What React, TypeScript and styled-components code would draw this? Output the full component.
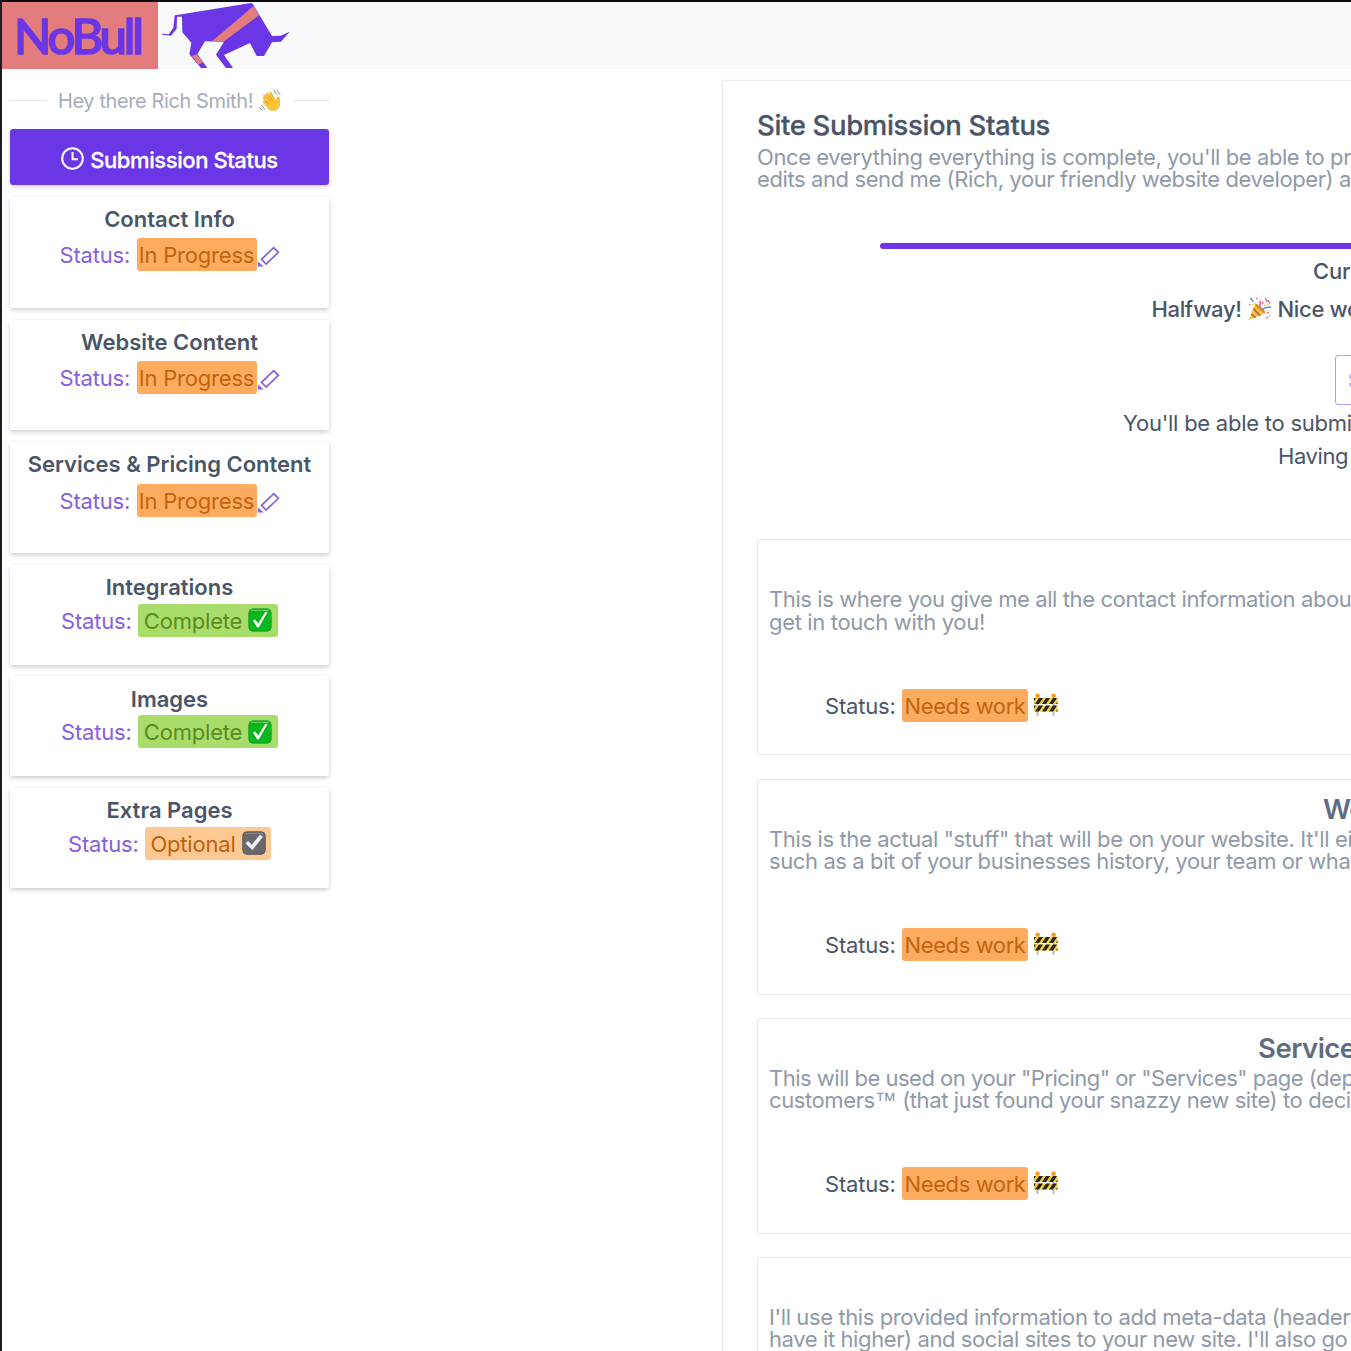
import React from "react";
import styled, { createGlobalStyle } from "styled-components";

const Global = createGlobalStyle`
  * { box-sizing: border-box; }
  html, body { margin: 0; padding: 0; overflow: hidden; }
  body { font-family: Inter, "Liberation Sans", sans-serif; background: #fff; color: #4a5568; }
  svg { display: block; flex: none; }
`;

const Window = styled.div`
  width: 1351px;
  height: 1351px;
  overflow: hidden;
  border-top: 2px solid #0b0b10;
  border-left: 2px solid #1c1b26;
  background: #fff;
`;
const Header = styled.header`
  height: 67px;
  display: flex;
  background: #f7f9fb;
`;
const LogoBox = styled.div`
  width: 156px;
  padding-left: 12px;
  background: #e27c7d;
  color: #6b36e5;
  font: 500 49px/67px Lato, sans-serif;
  letter-spacing: -3.2px;
  -webkit-text-stroke: 1.6px #6b36e5;
  white-space: nowrap;
`;
const Bull = styled.svg`
  margin-left: 4px;
`;
const Main = styled.main`
  display: flex;
  align-items: flex-start;
`;
const Sidebar = styled.aside`
  width: 319px;
  margin-left: 8px;
  padding-top: 18px;
  display: flex;
  flex-direction: column;
  flex: none;
`;
const Greeting = styled.div`
  height: 27px;
  display: flex;
  align-items: center;
  color: #a5adba;
  font-size: 20px;
  white-space: nowrap;
`;
const Rule = styled.i`
  width: 36px;
  height: 1px;
  background: #e4e6ea;
  &:last-child { margin-left: auto; }
`;
const Hello = styled.span`
  margin: 0 6px 0 12px;
  letter-spacing: -0.4px;
`;
const Active = styled.button`
  height: 56px;
  margin: 15px 0 12px;
  padding: 6px 0 0;
  display: flex;
  justify-content: center;
  align-items: center;
  gap: 6px;
  border: 0;
  border-radius: 3px;
  background: #6b36e5;
  color: #fff;
  font: 500 22px/28px Inter, sans-serif;
  letter-spacing: -0.42px;
  -webkit-text-stroke: 0.3px #fff;
  box-shadow: 0 2px 4px rgba(0, 0, 0, 0.16);
  svg { margin-top: -4px; }
`;
const Nav = styled.nav`
  display: flex;
  flex-direction: column;
  gap: 11.65px;
`;
const NavCard = styled.div<{ $short?: boolean }>`
  height: ${(p) => (p.$short ? 100 : 110.9)}px;
  padding-top: 7.4px;
  background: #fff;
  border-radius: 2px;
  box-shadow: 0 2px 5px rgba(0, 0, 0, 0.2);
`;
const NavTitle = styled.h3`
  margin: 0;
  text-align: center;
  font: 600 22px/30px Inter, sans-serif;
  color: #4a5568;
`;
const T = styled.span<{ $ls?: number }>`
  letter-spacing: ${(p) => p.$ls ?? -0.2}px;
  white-space: nowrap;
`;
const StatusRow = styled.div<{ $top: number }>`
  height: 33px;
  display: flex;
  justify-content: center;
  align-items: center;
  margin-top: ${(p) => p.$top}px;
  color: #8560df;
  font-size: 22px;
  line-height: 33px;
  white-space: nowrap;
  ${T} { padding-top: 2px; }
`;
const tones = {
  progress: ["#fdac5f", "#c2640f"],
  complete: ["#a9dd6b", "#5b8a1e"],
  optional: ["#fdc992", "#c2600f"],
};
const Badge = styled.span<{ $tone: keyof typeof tones; $w: number }>`
  height: 33px;
  width: ${(p) => p.$w}px;
  margin-left: 6.500px;
  display: flex;
  align-items: center;
  justify-content: center;
  gap: 6px;
  border-radius: 3px;
  background: ${(p) => tones[p.$tone][0]};
  color: ${(p) => tones[p.$tone][1]};
`;
const PencilIcon = styled.svg`
  margin: 4px 0 0 1px;
`;
const Panel = styled.section`
  width: 640px;
  height: 1300px;
  flex: none;
  margin: 11px 0 0 393px;
  padding: 28px 0 0 34px;
  border: 1px solid #e8eaed;
  border-radius: 3px;
  box-shadow: 0 0 3px rgba(0, 0, 0, 0.06);
`;
const Title = styled.h1`
  margin: 0;
  font: 500 27.5px/32px Inter, sans-serif;
  letter-spacing: -0.34px;
  color: #4a5568;
  -webkit-text-stroke: 0.3px #4a5568;
`;
const Copy = styled.p<{ $top?: number }>`
  margin: ${(p) => p.$top ?? 0}px 0 0;
  font-size: 22px;
  line-height: 22.4px;
  color: #8f99a8;
  white-space: nowrap;
`;
const Trademark = styled.span`
  font-family: "Liberation Sans", sans-serif;
  line-height: 1;
`;
const Line = styled.div<{ $h: number; $x: number; $weight?: number }>`
  height: ${(p) => p.$h}px;
  line-height: ${(p) => p.$h}px;
  padding-left: ${(p) => p.$x}px;
  display: flex;
  align-items: center;
  gap: 6px;
  font-size: 22px;
  font-weight: ${(p) => p.$weight ?? 400};
  white-space: nowrap;
`;
const Progress = styled.div`
  height: 6px;
  margin: 52px 0 4px 123px;
  border-radius: 3px 0 0 3px;
  background: #6b36e5;
`;
const Submit = styled.button`
  display: block;
  width: 120px;
  height: 50px;
  margin: 26px 0 2px 578px;
  padding: 0 0 0 12px;
  text-align: left;
  border: 1px solid #b49cee;
  border-radius: 3px;
  background: #fff;
  color: #b49cee;
  font: 600 22px/48px Inter, sans-serif;
`;
const Sections = styled.div`
  margin-top: 66.5px;
  display: flex;
  flex-direction: column;
  gap: 23.2px;
`;
const Section = styled.article`
  height: 216px;
  padding: 12px 0 0 11px;
  border: 1px solid #e6e8eb;
  border-radius: 3px;
`;
const SectionTitle = styled.h2<{ $x: number }>`
  margin: 0;
  height: 36px;
  padding-left: ${(p) => p.$x}px;
  font: 600 27.5px/34px Inter, sans-serif;
  letter-spacing: -0.5px;
  color: #5f6c80;
  white-space: nowrap;
`;
const NeedsWork = styled.div`
  height: 33px;
  margin: 55.4px 0 0 56px;
  display: flex;
  align-items: center;
  font-size: 22px;
  line-height: 33px;
  ${T} { padding-top: 2px; }
  > svg { margin: -1px 0 0 6px; }
`;

const Wave = () => (
  <svg width="24" height="24" viewBox="0 0 24 24" fill="none">
    <path d="M4 9.5 2.6 7.4c-.5-1.2.9-2 1.7-1.1l2 2.4L5.2 5.4c-.3-1.4 1.3-1.9 2-.8l2 3.2-.6-3.6c0-1.3 1.5-1.5 2-.3l3.6 7 .9 1.2.8-3.1c.4-1.7 2.5-1.5 2.4.2l.4 5.7c-.1 3.7-2.600 6.500-6.100 6.700-3 .2-5-1.200-6.300-3.400L2.300 13.200c-.6-1.200.8-2 1.600-1.100l1.900 1.900-3.500-4.400c-.6-1.100.7-2 1.700-.1Z" transform="translate(2 0)" fill="#fcc536" stroke="#dc9a2b" strokeWidth=".5" />
    <path d="m8.300 8.500 3.900 5M11 7.600l3.200 4.800M6.800 11.800l3.500 3.800" stroke="#dd9b2a" strokeWidth=".8" />
    <path d="m15 1 3.200 5M18.300 1.300 21 5.500M2.800 16.500l3 4M.8 18.500l2.200 3" stroke="#8e949c" strokeWidth="1" strokeLinecap="round" />
  </svg>
);
const Party = () => (
  <svg width="24" height="24" viewBox="0 0 24 24" fill="none">
    <path d="M1 23 7 6.500l10.500 9.500L1 23Z" fill="#f6c045" />
    <path d="m5.300 11.500 6.900 7.200M3.400 17l4.300 3.700" stroke="#b9573a" strokeWidth="1.400" />
    <path d="M7 6.500c2-.7 10.900 7.100 10.500 9.500-2.500.5-10.800-6.800-10.500-9.500Z" fill="#d98d29" />
    <path d="M12 11c-1-3 1.500-4 0-7.500" stroke="#ed669b" strokeWidth="1.700" />
    <path d="M14.500 12.500c2-2 4-2.500 8.500-2.500" stroke="#5d8ee5" strokeWidth="1.700" />
    <path d="M2 1.500c3-.5 1 2.500 3.500 3" stroke="#5d8ee5" strokeWidth="1.500" />
    <path d="M17 1.500c2 0 0 3 3 2.500 1.500-.3.500 2 2.500 2.300" stroke="#df5c83" strokeWidth="1.400" />
    <path d="M8 1.500h1.500M14 7l1.500-2M19 15.500l2 .5M18.500 20l1.500 1.500M1 7.500h1.500M21 19h1" stroke="#ec7b65" strokeWidth="1.600" />
    <path d="M16 8.500h1.500M19.500 8l1-1M4.500 7v1" stroke="#f1b63a" strokeWidth="1.500" />
  </svg>
);
const Barrier = () => (
  <svg width="24" height="24" viewBox="0 0 24 24">
    <path d="M2.500 5h2v18h-2zM18.500 5h2v18h-2z" fill="#b9bcc0" />
    <circle cx="3.600" cy="2.700" r="2.300" fill="#f59a23" />
    <circle cx="19.600" cy="2.700" r="2.300" fill="#f59a23" />
    <path d="M0 5h23.500v6H0zM0 12.500h23.500v6H0z" fill="#f2cf3a" />
    <path d="M0 5h2L0 8zM5 5h4l-4 6H1zM12 5h4l-4 6H8zM19 5h4l-4 6h-4zM23.500 8.500V11H22zM0 12.500h2l-2 3zM5 12.500h4l-4 6H1zM12 12.500h4l-4 6H8zM19 12.500h4l-4 6h-4zM23.500 16v2.500H22z" fill="#26241c" />
  </svg>
);
const Check = ({ gray }: { gray?: boolean }) => (
  <svg width="24" height="24" viewBox="0 0 24 24" fill="none">
    <rect x=".8" y=".8" width="22.400" height="22.400" rx="4" fill={gray ? "#68696d" : "#05b81c"} stroke={gray ? "#55565a" : "#2f9f2f"} />
    <path d="M3 2.300h18" stroke={gray ? "#8b8c90" : "#69d36b"} />
    {gray ? (
      <path d="m3.500 12.500 2.600-2.600 3.700 3.800 8-10 3.200 2L10.300 19z" fill="#f1f1f3" />
    ) : (
      <path d="m5 12.500 2-1.300 3.200 4.300 7.300-12 1.800.9L10.800 19.500h-1.500z" fill="#fff" />
    )}
  </svg>
);
const Pencil = () => (
  <PencilIcon width="22" height="21" viewBox="0 0 22 21" fill="none">
    <path d="m15.700 1.600 4.700 4.700L8.100 18 3.500 13.300z" stroke="#8560df" strokeWidth="1.700" />
    <path d="M0 15.500v5h5.800z" fill="#8560df" />
  </PencilIcon>
);
const Clock = () => (
  <svg width="23" height="23" viewBox="0 0 23 23" fill="none" stroke="#fff" strokeWidth="2">
    <circle cx="11.500" cy="11.500" r="10.300" />
    <path d="M11.500 5v7.300h5.500" />
  </svg>
);

const navItems = [
  { title: "Contact Info", state: "progress" },
  { title: "Website Content", state: "progress" },
  { title: "Services & Pricing Content", state: "progress" },
  { title: "Integrations", state: "complete" },
  { title: "Images", state: "complete" },
  { title: "Extra Pages", state: "optional" },
] as const;

type Row = { text: React.ReactNode; ls: number };
const sections: { title: string; x: number; lines: Row[] }[] = [
  {
    title: "",
    x: 0,
    lines: [
      { text: "This is where you give me all the contact information abou", ls: -0.4 },
      { text: "get in touch with you!", ls: -0.34 },
    ],
  },
  {
    title: "We",
    x: 554,
    lines: [
      { text: "This is the actual \"stuff\" that will be on your website. It'll ei", ls: -0.37 },
      { text: "such as a bit of your businesses history, your team or wha", ls: -0.4 },
    ],
  },
  {
    title: "Service",
    x: 489,
    lines: [
      { text: "This will be used on your \"Pricing\" or \"Services\" page (dep", ls: -0.5 },
      { text: <>customers<Trademark>™</Trademark> (that just found your snazzy new site) to deci</>, ls: -0.4 },
    ],
  },
  {
    title: "",
    x: 0,
    lines: [
      { text: "I'll use this provided information to add meta-data (header", ls: -0.4 },
      { text: "have it higher) and social sites to your new site. I'll also go", ls: -0.4 },
    ],
  },
];

export default function App() {
  return (
    <>
      <Global />
      <Window>
        <Header>
          <LogoBox>NoBull</LogoBox>
          <Bull width="130" height="67" viewBox="36 6 390 201">
            <path fill="#6b36e5" d="M31 101 56 103 70 84 74 46 100 42 303 9 308 11 366 108 392 107 419 95 393 125 366 127 342 168 320 168 300 129 222 165 249 204 228 204 198 164 222 125 165 124 142 162 172 204 153 204 118 163 124 128 97 97 96 50 81 50 80 86 63 107 31 104z" />
            <path fill="#e27c7d" d="M311 18 186 124H222L327 46zM126 168 140 163 159 187 146 194z" />
          </Bull>
        </Header>
        <Main>
          <Sidebar>
            <Greeting>
              <Rule />
              <Hello>Hey there Rich Smith!</Hello>
              <Wave />
              <Rule />
            </Greeting>
            <Active>
              <Clock />
              <span>Submission Status</span>
            </Active>
            <Nav>
              {navItems.map((n) => (
                <NavCard key={n.title} $short={n.state !== "progress"}>
                  <NavTitle>{n.title}</NavTitle>
                  <StatusRow $top={n.state === "progress" ? 4.05 : 1.6}>
                    <T>Status:</T>
                    {n.state === "progress" && (
                      <>
                        <Badge $tone="progress" $w={120}><T>In Progress</T></Badge>
                        <Pencil />
                      </>
                    )}
                    {n.state === "complete" && <Badge $tone="complete" $w={140}><T>Complete</T><Check /></Badge>}
                    {n.state === "optional" && <Badge $tone="optional" $w={126}><T>Optional</T><Check gray /></Badge>}
                  </StatusRow>
                </NavCard>
              ))}
            </Nav>
          </Sidebar>
          <Panel>
            <Title>Site Submission Status</Title>
            <Copy $top={5}>
              <T $ls={-0.42}>Once everything everything is complete, you'll be able to pr</T><br />
              <T $ls={-0.4}>edits and send me (Rich, your friendly website developer) a</T>
            </Copy>
            <Progress />
            <Line $h={36} $x={556} $weight={500}><T>Cur</T></Line>
            <Line $h={40} $x={394.5} $weight={500}><T $ls={-0.35}>Halfway!</T><Party /><T $ls={-0.35}>Nice wo</T></Line>
            <Submit>S</Submit>
            <Line $h={33} $x={366}><T $ls={-0.25}>You'll be able to submi</T></Line>
            <Line $h={33} $x={521}><T $ls={-0.4}>Having</T></Line>
            <Sections>
              {sections.map((s, i) => (
                <Section key={i}>
                  <SectionTitle $x={s.x}>{s.title}</SectionTitle>
                  <Copy>
                    <T $ls={s.lines[0].ls}>{s.lines[0].text}</T><br />
                    <T $ls={s.lines[1].ls}>{s.lines[1].text}</T>
                  </Copy>
                  <NeedsWork>
                    <T>Status:</T>
                    <Badge $tone="progress" $w={126}><T $ls={-0.4}>Needs work</T></Badge>
                    <Barrier />
                  </NeedsWork>
                </Section>
              ))}
            </Sections>
          </Panel>
        </Main>
      </Window>
    </>
  );
}
